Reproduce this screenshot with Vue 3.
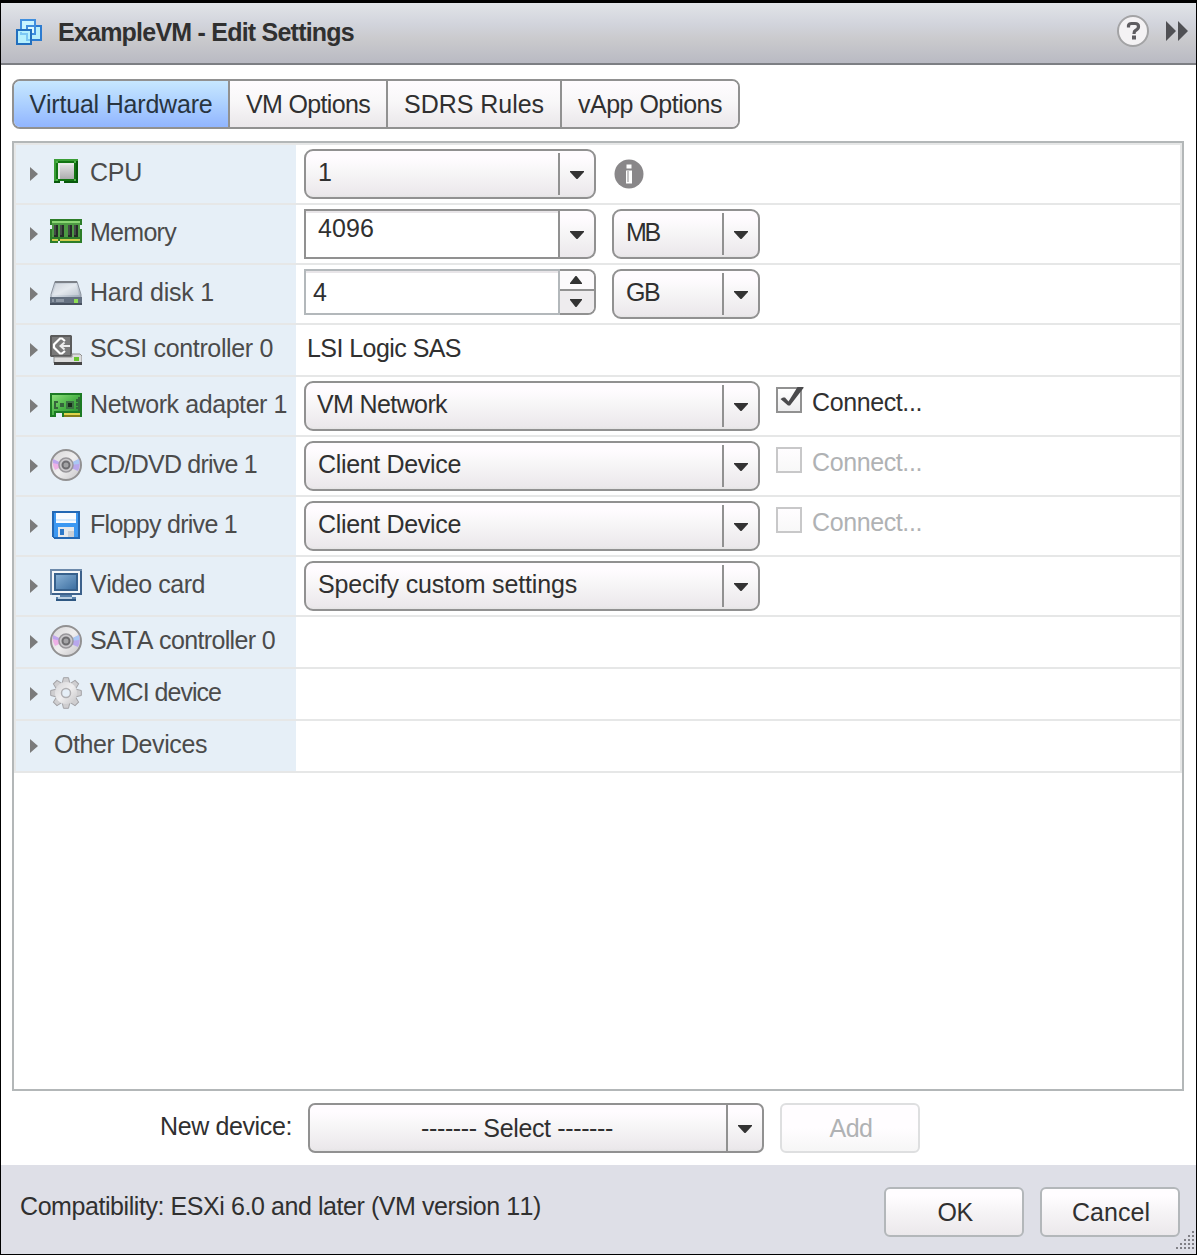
<script setup>
const tabs = [
  { text: 'Virtual Hardware', cell: 214, w: 183, active: true },
  { text: 'VM Options', cell: 158, w: 124 },
  { text: 'SDRS Rules', cell: 174, w: 140 },
  { text: 'vApp Options', cell: 178, w: 144 },
]

const devices = [
  { name: 'CPU', w: 52, icon: 'cpu', kind: 'select', value: '1', vw: 14, size: 'mid', info: true },
  { name: 'Memory', w: 86, icon: 'memory', kind: 'combo', value: '4096', vw: 56, unit: 'MB' },
  { name: 'Hard disk 1', w: 124, icon: 'disk', kind: 'stepper', value: '4', vw: 14, unit: 'GB' },
  { name: 'SCSI controller 0', w: 183, icon: 'scsi', kind: 'text', value: 'LSI Logic SAS', vw: 154, short: true },
  { name: 'Network adapter 1', w: 197, icon: 'nic', kind: 'select', value: 'VM Network', vw: 130, connect: true, checked: true },
  { name: 'CD/DVD drive 1', w: 167, icon: 'disc', kind: 'select', value: 'Client Device', vw: 143, connect: true },
  { name: 'Floppy drive 1', w: 147, icon: 'floppy', kind: 'select', value: 'Client Device', vw: 143, connect: true },
  { name: 'Video card', w: 115, icon: 'video', kind: 'select', value: 'Specify custom settings', vw: 259 },
  { name: 'SATA controller 0', w: 185, icon: 'disc', kind: 'none', short: true },
  { name: 'VMCI device', w: 131, icon: 'gear', kind: 'none', short: true },
  { name: 'Other Devices', w: 153, kind: 'none', short: true },
]

// Tracks a label so that its advance equals the given width.
const vFit = {
  mounted(el, { value }) {
    const natural = el.getBoundingClientRect().width
    el.style.letterSpacing = (value - natural) / el.textContent.length + 'px'
  },
}

const teeth = [0, 45, 90, 135, 180, 225, 270, 315]
</script>

<template>
  <div class="dialog">
    <header class="titlebar">
      <svg class="vm-icon" viewBox="0 0 26 26" shape-rendering="crispEdges">
        <rect x="5" y="1" width="14" height="14" fill="#c8f4ff" stroke="#3f8ede" stroke-width="2" />
        <rect x="11" y="7" width="14" height="14" fill="#b9effc" stroke="#2c7bd0" stroke-width="2" />
        <path d="M11 15V7h8v8z" fill="#dcfaff" stroke="#3f8ede" stroke-width="2" />
        <rect x="1" y="11" width="14" height="14" fill="#b5f0fe" stroke="#226fbe" stroke-width="2" />
        <path d="M5 13v2h6v6h3" fill="none" stroke="#7cc8f4" stroke-width="2" />
      </svg>
      <h1><span v-fit="296" class="t">ExampleVM - Edit Settings</span></h1>
      <svg class="help" viewBox="0 0 32 32">
        <circle cx="16" cy="16" r="15" fill="#f4f2f4" stroke="#a3a3a5" stroke-width="2" />
        <path d="M11.5 12.5V10.5Q12 8.5 14.5 8.5H18Q21.500 8.500 21.500 11.500Q21.500 14 18.500 15.500Q17 16.300 17 19" fill="none" stroke="#5e5c60" stroke-width="3.200" />
        <rect x="15" y="20.500" width="4" height="4" fill="#5e5c60" />
      </svg>
      <svg class="expand" viewBox="0 0 22 20"><path d="M0 0L10 10L0 20zM12 0L22 10L12 20z" fill="#505054" /></svg>
    </header>

    <main>
      <nav class="tabs">
        <div v-for="t in tabs" :key="t.text" class="tab" :class="{ active: t.active }" :style="{ width: t.cell + 'px' }">
          <span v-fit="t.w" class="t">{{ t.text }}</span>
        </div>
      </nav>

      <section class="panel">
        <div class="grid">
          <div v-for="d in devices" :key="d.name" class="row" :class="{ short: d.short }">
            <div class="label">
              <svg class="twisty" viewBox="0 0 8 14"><path d="M0 0L8 7L0 14z" fill="#7b7b7b" /></svg>
              <span v-if="d.icon" class="icon">
                <svg v-if="d.icon === 'cpu'" viewBox="0 0 32 32" shape-rendering="crispEdges">
                  <rect x="4" y="2" width="24" height="24" fill="#08590b" />
                  <path d="M4 2h24v2H6v20H4z" fill="#3a9d36" />
                  <rect x="6" y="4" width="20" height="20" fill="#137413" />
                  <path d="M6 4h2v2H6zM24 4h2v2h-2zM6 22h2v2H6zM24 22h2v2h-2z" fill="#4fb34a" />
                  <rect x="8" y="6" width="16" height="16" fill="#e9ebe9" />
                  <rect x="10" y="8" width="14" height="14" fill="url(#chip)" />
                  <rect x="10" y="24" width="4" height="2" fill="#e6eff7" />
                </svg>
                <svg v-else-if="d.icon === 'memory'" viewBox="0 0 32 32" shape-rendering="crispEdges">
                  <path d="M0 2h32v6h-2v4h2v14H10v-2H8v2H0V12h2V8H0z" fill="#2d7d28" />
                  <rect x="2" y="4" width="28" height="2" fill="#8ad573" />
                  <path d="M2 6h28v14H2z" fill="#4d9a43" />
                  <path d="M4 8h4v12H4zM10 8h4v12h-4zM18 8h4v12h-4zM24 8h4v12h-4z" fill="#252c28" />
                  <path d="M4 8h2v10H4zM10 8h2v10h-2zM18 8h2v10h-2zM24 8h2v10h-2z" fill="#444a46" />
                  <path d="M2 22h6v2H2zM10 22h20v2H10z" fill="#d1ca4c" />
                </svg>
                <svg v-else-if="d.icon === 'disk'" viewBox="0 0 32 32">
                  <path d="M5 4.500h22l4 13v3H1v-3z" fill="url(#metal)" stroke="#8b929d" />
                  <path d="M5 5h22" stroke="#7b8087" stroke-width="2" />
                  <path d="M6 7h20l3 11H3z" fill="#fff" opacity=".3" />
                  <path d="M0 20h32v8H0z" fill="#647080" shape-rendering="crispEdges" />
                  <path d="M0 26h32v2H0z" fill="#485260" shape-rendering="crispEdges" />
                  <path d="M2 22h2v3H2zM6 22h8v3H6z" fill="#8e98a5" />
                  <rect x="24" y="22" width="4" height="4" fill="#8ede55" />
                </svg>
                <svg v-else-if="d.icon === 'scsi'" viewBox="0 0 32 32">
                  <path d="M1 2h20l1 1v20l-1 1H1l-1-1V3z" fill="#5b5b5b" />
                  <path d="M2 4h18v18H2z" fill="#7a7a7a" />
                  <path d="M15 8L12 5.500L10 5.500L4 11.500V14.500L10 20.500H12L15 18" fill="none" stroke="#fff" stroke-width="2.200" />
                  <path d="M14.500 9.500L10.500 13L14.500 16.500M10.500 13H20" fill="none" stroke="#ececec" stroke-width="2" />
                  <path d="M22 21h8l2 2v7H4v-6h18z" fill="#dcdcdc" stroke="#8f8f8f" />
                  <path d="M4 30.500h28" stroke="#454545" stroke-width="3" />
                  <rect x="24" y="24" width="5" height="4" fill="#69c52f" />
                </svg>
                <svg v-else-if="d.icon === 'nic'" viewBox="0 0 32 32" shape-rendering="crispEdges">
                  <path d="M0 4h32v24H12v-4H6v4H0z" fill="#1c7b24" />
                  <path d="M2 6h28v16H4v4H2z" fill="url(#board)" />
                  <path d="M4 12h4v2H4zM4 14h2v4H4zM4 18h4v2H4zM10 14h4v4h-4z" fill="#35643c" />
                  <path d="M16 12h8v8h-8z" fill="#3d7344" />
                  <path d="M18 14h4v4h-4z" fill="#182a1b" />
                  <path d="M26 10h2v3h-2zM28 8h2v14h-2zM26 14h2v3h-2zM26 18h2v2h-2z" fill="#33693a" />
                  <path d="M14 24h16v2H14z" fill="#ded34b" />
                  <path d="M14 26h16v2H14z" fill="#857e18" />
                </svg>
                <svg v-else-if="d.icon === 'disc'" viewBox="0 0 32 32">
                  <circle cx="16" cy="16" r="15" fill="url(#disc)" stroke="#929192" stroke-width="2" />
                  <path d="M3 10L11 14V18L5 21Q2 16 3 10z" fill="#eeb0e6" />
                  <path d="M3 10L11 14V16L3 14z" fill="#bda6ee" />
                  <path d="M29 10L21 14V19L28 22Q31 16 29 10z" fill="#b8a7ec" />
                  <path d="M29 10L21 14V16L29 15z" fill="#a9c7f4" />
                  <circle cx="16" cy="16" r="7" fill="#c9c7ca" stroke="#98969a" stroke-width="1.500" />
                  <circle cx="16" cy="16" r="3.500" fill="#a3a3a5" stroke="#6d6c6f" stroke-width="2" />
                </svg>
                <svg v-else-if="d.icon === 'floppy'" viewBox="0 0 32 32" shape-rendering="crispEdges">
                  <path d="M2 2h28v28H4l-2-2z" fill="#2468b4" />
                  <path d="M4 4h24v24H4z" fill="#3c98f2" />
                  <rect x="6" y="4" width="20" height="10" fill="#f8fbff" />
                  <rect x="6" y="10" width="20" height="2" fill="#d5e9fc" />
                  <rect x="8" y="18" width="16" height="10" fill="#e6e8eb" />
                  <rect x="18" y="22" width="6" height="6" fill="#cacfd5" />
                  <rect x="10" y="20" width="4" height="6" fill="#2d78c8" />
                </svg>
                <svg v-else-if="d.icon === 'video'" viewBox="0 0 32 32" shape-rendering="crispEdges">
                  <path d="M0 0h32v26H0z" fill="#3d618b" />
                  <path d="M0 0h32v2H2v24H0z" fill="#6c89aa" />
                  <path d="M2 2h28v22H2z" fill="#f3f6f9" />
                  <path d="M4 4h24v18H4z" fill="#37618d" />
                  <path d="M6 6h20v14H6z" fill="url(#screen)" />
                  <path d="M10 26h12v2h4v4H6v-4h4z" fill="#5780aa" />
                  <path d="M8 28h14v2H8z" fill="#b9cde0" />
                  <path d="M6 30h20v2H6z" fill="#2e5782" />
                </svg>
                <svg v-else viewBox="0 0 32 32">
                  <g fill="#cfced0" stroke="#a3a2a5">
                    <path v-for="a in teeth" :key="a" d="M12 7L13.500 .7H18.500L20 7z" :transform="`rotate(${a} 16 16)`" />
                  </g>
                  <circle cx="16" cy="16" r="11" fill="url(#disc)" />
                  <circle cx="16" cy="16" r="4.500" fill="#e6eff7" stroke="#b0afb2" stroke-width="1.500" />
                </svg>
              </span>
              <span v-fit="d.w" class="t name">{{ d.name }}</span>
            </div>

            <div class="value" :class="{ plain: d.kind === 'text' }">
              <span v-if="d.kind === 'text'" v-fit="d.vw" class="t">{{ d.value }}</span>

              <div v-if="d.kind === 'select'" class="select" :class="d.size">
                <div class="face"><span v-fit="d.vw" class="t" :class="{ nudge: d.value[0] === 'V' }">{{ d.value }}</span></div>
                <i class="bar"></i>
                <div class="drop"><svg viewBox="0 0 14 8"><path d="M0 0H14V1L7.500 8H6.500L0 1z" fill="#333" /></svg></div>
              </div>

              <div v-if="d.kind === 'combo'" class="combo">
                <div class="field"><span v-fit="d.vw" class="t">{{ d.value }}</span></div>
                <div class="drop"><svg viewBox="0 0 14 8"><path d="M0 0H14V1L7.500 8H6.500L0 1z" fill="#333" /></svg></div>
              </div>

              <div v-if="d.kind === 'stepper'" class="stepper">
                <div class="field"><span v-fit="d.vw" class="t">{{ d.value }}</span></div>
                <div class="steps">
                  <div><svg viewBox="0 0 12 8"><path d="M0 8V7L5.500 0H6.500L12 7V8z" fill="#333" /></svg></div>
                  <div><svg viewBox="0 0 12 8"><path d="M0 0V1L5.500 8H6.500L12 1V0z" fill="#333" /></svg></div>
                </div>
              </div>

              <div v-if="d.unit" class="select unit">
                <div class="face"><span v-fit="33" class="t">{{ d.unit }}</span></div>
                <i class="bar"></i>
                <div class="drop"><svg viewBox="0 0 14 8"><path d="M0 0H14V1L7.500 8H6.500L0 1z" fill="#333" /></svg></div>
              </div>

              <svg v-if="d.info" class="info" viewBox="0 0 30 30">
                <circle cx="15" cy="15" r="14.500" fill="#898789" />
                <path d="M12.500 5.500h5v4h-5zM12 11.500h6v13h-6z" fill="#fff" />
                <path d="M14 12v11" stroke="#b5b3b5" stroke-width="1.500" />
              </svg>

              <div v-if="d.connect" class="connect" :class="{ off: !d.checked }">
                <span class="box">
                  <svg v-if="d.checked" viewBox="0 0 26 26"><path d="M4.500 12L7 10.500H9L12.500 14.500L21.500 0H27.500V1L14 18.500H12z" fill="#4b4b4d" /></svg>
                </span>
                <span v-fit="110" class="t">Connect...</span>
              </div>
            </div>
          </div>
        </div>
      </section>

      <div class="new-device">
        <div class="caption"><span v-fit="132" class="t">New device:</span></div>
        <div class="select full">
          <div class="face"><span v-fit="192" class="t">------- Select -------</span></div>
          <i class="bar"></i>
          <div class="drop"><svg viewBox="0 0 14 8"><path d="M0 0H14V1L7.500 8H6.500L0 1z" fill="#333" /></svg></div>
        </div>
        <div class="btn disabled"><span v-fit="43" class="t">Add</span></div>
      </div>
    </main>

    <footer>
      <span v-fit="521" class="t compat">Compatibility: ESXi 6.0 and later (VM version 11)</span>
      <div class="btn"><span v-fit="35" class="t">OK</span></div>
      <div class="btn"><span v-fit="78" class="t">Cancel</span></div>
      <svg class="grip" viewBox="0 0 20 20" shape-rendering="crispEdges">
        <path d="M18 0h2v2h-2zM14 4h2v2h-2zM18 4h2v2h-2zM10 8h2v2h-2zM14 8h2v2h-2zM18 8h2v2h-2zM6 12h2v2H6zM10 12h2v2h-2zM14 12h2v2h-2zM18 12h2v2h-2zM2 16h2v2H2zM6 16h2v2H6zM10 16h2v2h-2zM14 16h2v2h-2zM18 16h2v2h-2z" fill="#808086" />
      </svg>
    </footer>

    <svg class="defs">
      <defs>
        <linearGradient id="chip" x2="0" y2="1"><stop stop-color="#e0dfe1" /><stop offset="1" stop-color="#adacae" /></linearGradient>
        <linearGradient id="metal" x2="1" y2="1"><stop stop-color="#b5bdc8" /><stop offset=".5" stop-color="#d9e0e8" /><stop offset="1" stop-color="#9ba6b4" /></linearGradient>
        <linearGradient id="board" x2="1" y2="1"><stop stop-color="#8bdf78" /><stop offset=".5" stop-color="#4cb449" /><stop offset="1" stop-color="#29902f" /></linearGradient>
        <linearGradient id="disc" x2="1" y2="1"><stop stop-color="#d6d5d7" /><stop offset=".5" stop-color="#efeeef" /><stop offset="1" stop-color="#c5c4c6" /></linearGradient>
        <linearGradient id="screen" x2="1" y2="1"><stop stop-color="#86afd4" /><stop offset="1" stop-color="#3e70a2" /></linearGradient>
      </defs>
    </svg>
  </div>
</template>

<style>
body { background: #000; }
</style>

<style scoped>
.dialog {
  box-sizing: border-box;
  width: 1197px;
  height: 1255px;
  border: solid #000;
  border-width: 3px 1px 1px;
  background: #fff;
  display: flex;
  flex-direction: column;
  overflow: hidden;
  font: 25px/30px "Liberation Sans", Arial, sans-serif;
  color: #303030;
}
.dialog * { box-sizing: border-box; }
.defs { position: absolute; width: 0; height: 0; }
svg { display: block; flex: none; }
.t { display: inline-block; white-space: pre; flex: none; font-kerning: none; }

.titlebar {
  height: 62px;
  flex: none;
  display: flex;
  align-items: flex-start;
  background: linear-gradient(#e1e4e8, #d2d4dc 35%, #cacacd 60%, #b9bac3);
  border-bottom: 2px solid #7d7f84;
}
.vm-icon { width: 26px; height: 26px; margin: 16px 0 0 15px; }
h1 { margin: 14px 0 0 16px; font: inherit; font-weight: bold; flex: 1; }
.help { width: 32px; height: 32px; margin: 12px 0 0; }
.expand { width: 22px; height: 20px; margin: 18px 8px 0 17px; }

main { flex: 1; padding: 14px 12px 0 11px; }
.tabs {
  display: flex;
  width: 728px;
  height: 50px;
  border: 2px solid #919191;
  border-radius: 8px;
  overflow: hidden;
}
.tab {
  display: flex;
  justify-content: center;
  padding-top: 8px;
  background: linear-gradient(#fffcff, #f8f7f8 45%, #eae7ea);
}
.tab + .tab { border-left: 2px solid #919191; }
.tab.active { background: linear-gradient(#c7e7ff, #acd0ff 50%, #91b5ff); color: #283440; }

.panel { margin-top: 12px; height: 950px; border: 2px solid #b3b7b8; }
.grid { border: 2px solid #e6e7e7; border-bottom: 0; }
.row { display: flex; height: 60px; border-bottom: 2px solid #e6e7e7; }
.row.short { height: 52px; }
.label {
  width: 280px;
  flex: none;
  display: flex;
  align-items: flex-start;
  padding: 12px 0 0 14px;
  background: #e6eff7;
  color: #4b4b4b;
}
.short .label { padding-top: 8px; }
.twisty { width: 8px; height: 14px; margin: 10px 16px 0 0; }
.icon { width: 32px; height: 32px; margin: 0 8px 0 -4px; flex: none; }
.icon svg { width: 32px; height: 32px; }
.value { flex: 1; display: flex; align-items: flex-start; padding: 4px 0 0 8px; }
.value.plain { padding: 8px 0 0 11px; }

.select {
  width: 456px;
  height: 50px;
  flex: none;
  display: flex;
  border: 2px solid #919191;
  border-radius: 9px;
  background: linear-gradient(#fffcff 15%, #f7f6f7 45%, #ebe8eb 95%, #e4e4e4);
}
.select.mid { width: 292px; }
.select.unit { width: 148px; margin-left: 16px; }
.face { flex: 1; padding: 6px 0 0 12px; }
.nudge { margin-left: -1px; }
.bar { width: 2px; height: 42px; margin-top: 2px; background: #919191; }
.drop { width: 34px; flex: none; display: flex; justify-content: center; padding-top: 20px; }
.drop svg { width: 14px; height: 8px; }

.combo, .stepper { width: 292px; height: 50px; display: flex; flex: none; }
.stepper { height: 46px; }
.field {
  width: 256px;
  border: 2px solid #919191;
  box-shadow: inset 0 2px #e8e5e8;
  padding: 2px 0 0 12px;
}
.combo .drop {
  width: 36px;
  border: 2px solid #919191;
  border-left: 0;
  border-radius: 0 9px 9px 0;
  background: linear-gradient(#fffcff 15%, #f7f6f7 45%, #ebe8eb);
}
.stepper .field { border-color: #b3b8bb; padding: 6px 0 0 7px; }
.steps {
  width: 36px;
  border: 2px solid #919191;
  border-left: 0;
  border-radius: 0 8px 8px 0;
  overflow: hidden;
}
.steps div {
  height: 18px;
  display: flex;
  justify-content: center;
  padding-top: 5px;
  background: #fcfafc;
}
.steps svg { width: 12px; height: 8px; margin-right: 2px; }
.steps div + div { height: 24px; padding-top: 8px; border-top: 2px solid #919191; background: #eeecee; }

.info { width: 30px; height: 30px; margin: 10px 0 0 18px; }
.connect { display: flex; margin: 6px 0 0 16px; color: #303030; }
.box {
  width: 26px;
  height: 26px;
  margin-right: 10px;
  border: 2px solid #919191;
  background: linear-gradient(#fff, #ededee);
}
.box svg { width: 26px; height: 26px; margin: -2px; overflow: visible; }
.connect.off { color: #b0b2b4; }
.off .box { border-color: #c8c8c9; background: linear-gradient(#fffdff, #f8f8f8); }

.new-device { display: flex; align-items: flex-start; margin-top: 12px; }
.caption { margin: 8px 0 0 148px; width: 148px; }
.select.full { border-radius: 7px; }
.full .face { display: flex; justify-content: center; padding: 8px 2px 0 0; }
.full .bar { height: 46px; margin: 0; }
.btn {
  width: 140px;
  height: 50px;
  flex: none;
  display: flex;
  justify-content: center;
  padding: 8px 0 0 2px;
  border: 2px solid #b3b7ba;
  border-radius: 6px;
  background: linear-gradient(#fffdff 15%, #f6f4f6 50%, #ebe8eb);
}
.btn.disabled {
  margin-left: 16px;
  color: #b0b2b4;
  border-color: #dedfe0;
  background: linear-gradient(#fffdff 50%, #f6f6f6);
}

footer {
  position: relative;
  height: 89px;
  flex: none;
  display: flex;
  align-items: flex-start;
  gap: 16px;
  padding: 22px 16px 0 19px;
  background: #dedfe7;
}
.compat { margin: 4px auto 0 0; }
.grip { position: absolute; right: 2px; bottom: 3px; width: 20px; height: 20px; }
</style>
